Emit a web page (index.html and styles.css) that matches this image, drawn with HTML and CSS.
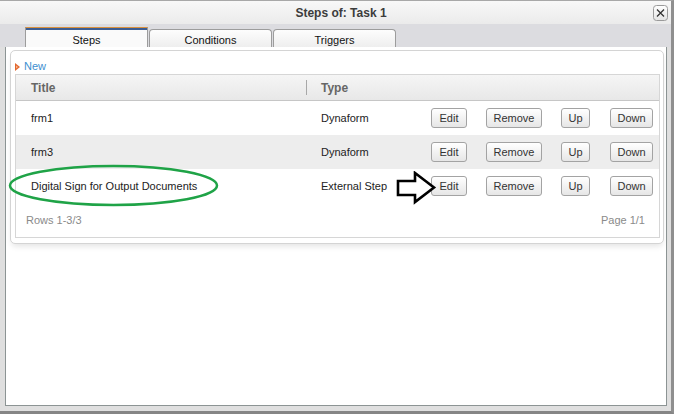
FILE: index.html
```html
<!DOCTYPE html>
<html>
<head>
<meta charset="utf-8">
<link rel="stylesheet" href="styles.css">
</head>
<body>
<div class="window">
  <div class="titlebar">
    <span class="title">Steps of: Task 1</span>
    <span class="close">
      <svg width="15" height="16" viewBox="0 0 15 16">
        <defs><linearGradient id="cg" x1="0" y1="0" x2="0" y2="1"><stop offset="0" stop-color="#ffffff"/><stop offset="1" stop-color="#e4e4e4"/></linearGradient></defs>
        <rect x="0.5" y="0.5" width="14" height="15" rx="3" fill="url(#cg)" stroke="#9a9a9a"/>
        <path d="M4 4.5 L11 11.5 M11 4.5 L4 11.5" stroke="#333" stroke-width="1.3"/>
      </svg>
    </span>
  </div>
  <div class="tabstrip">
    <div class="tab active">Steps</div>
    <div class="tab">Conditions</div>
    <div class="tab">Triggers</div>
  </div>
  <div class="content">
    <div class="panel">
      <div class="newline">
        <svg class="newicon" width="6" height="8" viewBox="0 0 6 8"><polygon points="0,0 5,4 0,8" fill="#e2672f"/><polygon points="1,2.5 3,4 1,5.5" fill="#f6b48c"/></svg>
        <span class="newlink">New</span>
      </div>
      <div class="grid">
        <div class="ghead">
          <div class="c-title">Title</div>
          <span class="sep"></span>
          <div class="c-type">Type</div>
        </div>
        <div class="row">
          <div class="c-title">frm1</div>
          <div class="c-type">Dynaform</div>
          <div class="actions">
            <span class="btn b-edit">Edit</span>
            <span class="btn b-remove">Remove</span>
            <span class="btn b-up">Up</span>
            <span class="btn b-down">Down</span>
          </div>
        </div>
        <div class="row alt">
          <div class="c-title">frm3</div>
          <div class="c-type">Dynaform</div>
          <div class="actions">
            <span class="btn b-edit">Edit</span>
            <span class="btn b-remove">Remove</span>
            <span class="btn b-up">Up</span>
            <span class="btn b-down">Down</span>
          </div>
        </div>
        <div class="row">
          <div class="c-title">Digital Sign for Output Documents</div>
          <div class="c-type">External Step</div>
          <div class="actions">
            <span class="btn b-edit">Edit</span>
            <span class="btn b-remove">Remove</span>
            <span class="btn b-up">Up</span>
            <span class="btn b-down">Down</span>
          </div>
        </div>
        <div class="gfoot">
          <span>Rows 1-3/3</span>
          <span>Page 1/1</span>
        </div>
      </div>
    </div>
  </div>
  <svg class="mark-ellipse" width="212" height="45" viewBox="0 0 212 45">
    <ellipse cx="105.5" cy="22.5" rx="103.5" ry="19.5" fill="none" stroke="#1fa347" stroke-width="2.5"/>
  </svg>
  <svg class="mark-arrow" width="44" height="34" viewBox="0 0 44 34">
    <polygon points="3,10 20,10 20,2 39,16.5 20,31 20,24 3,24" fill="#ffffff" stroke="#000" stroke-width="2.6" stroke-linejoin="miter"/>
  </svg>
</div>
</body>
</html>
```
FILE: styles.css
```css
* { box-sizing: border-box; }
html, body { margin: 0; padding: 0; }
body {
  background: #dfdfdf;
  font-family: "Liberation Sans", Arial, sans-serif;
  font-size: 11px;
  color: #222;
}
.window {
  position: relative;
  width: 674px;
  height: 414px;
  background: #dfdfdf;
  border-top: 1px solid #a8a8a8;
  border-right: 3px solid #8f8f8f;
  border-bottom: 3px solid #858585;
  display: flex;
  flex-direction: column;
}
.titlebar {
  height: 23px;
  flex: none;
  display: grid;
  grid-template-columns: 1fr auto 1fr;
  padding-left: 11px;
  background: linear-gradient(#f8f8f8, #ebebeb);
}
.title {
  grid-column: 2;
  align-self: center;
  font-weight: bold;
  font-size: 12px;
  color: #3c3c3c;
  line-height: 14px;
  padding-top: 1px;
}
.close {
  grid-column: 3;
  justify-self: end;
  align-self: start;
  margin-top: 4px;
  margin-right: 3px;
  width: 15px;
  height: 16px;
  display: block;
}
.close svg { display: block; }
.tabstrip {
  height: 23px;
  flex: none;
  display: flex;
  align-items: flex-end;
  gap: 1px;
  padding-left: 25px;
  background: #dcdce0;
}
.tab {
  width: 123px;
  height: 18px;
  border: 1px solid #9c9c9c;
  border-bottom: none;
  border-radius: 4px 4px 0 0;
  background: linear-gradient(#fdfdfd, #eeeeee);
  display: flex;
  justify-content: center;
  align-items: center;
  padding-top: 2px;
  font-size: 11px;
  color: #111;
}
.tab.active {
  height: 20px;
  border-radius: 0;
  border-top: 1px solid #d9913f;
  box-shadow: inset 0 2px 0 #3c5d92;
  background: #fafafa;
  padding-top: 4px;
}
.content {
  flex: 1;
  margin: 0 4px 5px 5px;
  background: #ffffff;
  border: 1px solid #8c9494;
  border-top: none;
  padding: 3px 2px 0 4px;
}
.panel {
  border: 1px solid #d4d4d4;
  border-radius: 5px;
  padding: 8px 3px 5px 4px;
  background: #fff;
  box-shadow: 0 4px 6px -2px rgba(0,0,0,0.12);
}
.newline {
  height: 15px;
  display: flex;
  align-items: center;
  gap: 3px;
}
.newicon { display: block; margin-top: 1px; }
.newlink {
  color: #3d8fcf;
  font-size: 11px;
  line-height: 15px;
}
.grid {
  border: 1px solid #d6d6d6;
}
.ghead {
  height: 26px;
  display: flex;
  align-items: center;
  border-bottom: 1px solid #c6c6c6;
  background: linear-gradient(#f5f5f5, #e8e8e8);
  font-weight: bold;
  font-size: 12px;
  color: #666;
}
.ghead .c-title { width: 290px; padding-left: 15px; }
.sep {
  width: 1px;
  height: 15px;
  background: #a8a8a8;
}
.ghead .c-type { padding-left: 14px; }
.row {
  height: 34px;
  display: flex;
  align-items: center;
  background: #fff;
  color: #222;
}
.row.alt { background: #ededed; }
.row .c-title { width: 290px; padding-left: 15px; }
.row .c-type { width: 115px; padding-left: 15px; }
.actions {
  display: flex;
  gap: 19px;
  margin-left: 10px;
}
.btn {
  height: 20px;
  border: 1px solid #a3a3a3;
  border-radius: 3px;
  background: linear-gradient(#ffffff, #e6e6e6);
  display: flex;
  align-items: center;
  justify-content: center;
  color: #333;
  font-size: 11px;
}
.b-edit { width: 36px; }
.b-remove { width: 56px; }
.b-up { width: 29px; }
.b-down { width: 43px; margin-left: 1px; }
.gfoot {
  height: 34px;
  display: flex;
  align-items: center;
  justify-content: space-between;
  padding: 0 14px 0 10px;
  color: #8a8a8a;
  font-size: 11px;
}
.mark-ellipse {
  position: absolute;
  left: 8px;
  top: 162px;
}
.mark-arrow {
  position: absolute;
  left: 395px;
  top: 170px;
}
```
